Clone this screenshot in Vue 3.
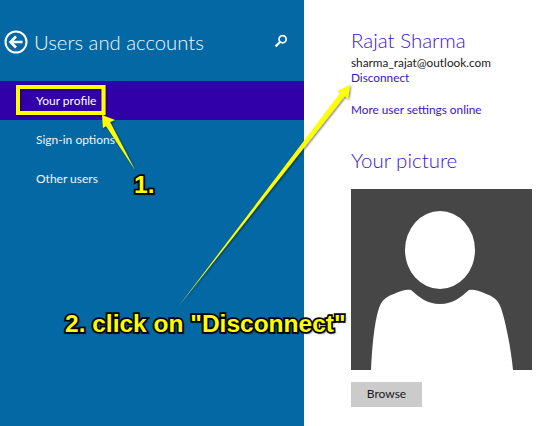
<template>
  <div class="page">
    <aside class="sidebar">
      <header class="side-head">
        <svg class="back" viewBox="0 0 24 24" width="24" height="24">
          <circle cx="12" cy="12" r="10.5" fill="none" stroke="#fff" stroke-width="2" />
          <path d="M18.5 12H7M12 6.5 6.5 12l5.5 5.5" fill="none" stroke="#fff" stroke-width="2.6" />
        </svg>
        <h1 class="side-title">Users and accounts</h1>
        <svg class="search" viewBox="0 0 14 14" width="14" height="14">
          <circle cx="8.6" cy="5.2" r="3.6" fill="none" stroke="#fff" stroke-width="1.7" />
          <path d="M6 8 1.6 12.4" stroke="#fff" stroke-width="2.2" fill="none" />
        </svg>
      </header>
      <nav class="menu">
        <a
          v-for="item in menu"
          :key="item"
          class="menu-item"
          :class="{ active: item === 'Your profile' }"
        >{{ item }}</a>
      </nav>
    </aside>

    <main class="content">
      <h2 class="heading">Rajat Sharma</h2>
      <div class="email">sharma_rajat@outlook.com</div>
      <a class="link">Disconnect</a>
      <a class="link more">More user settings online</a>
      <h2 class="heading picture-title">Your picture</h2>
      <svg class="picture" viewBox="0 0 181 181" width="181" height="181">
        <rect width="181" height="181" fill="#464646" />
        <ellipse cx="89" cy="61" rx="35" ry="39" fill="#fff" />
        <path
          d="M20 181C21 160 23 134 28 119C31 110 37 107 45 104C50 102 55 100 60 101C68 108 76 115 89 115C102 115 110 108 118 101C123 100 128 102 133 104C141 107 147 110 150 119C155 134 160 160 162 181Z"
          fill="#fff"
        />
      </svg>
      <button class="browse">Browse</button>
    </main>

    <!-- annotations drawn on top of the screenshot -->
    <svg class="marks" viewBox="0 0 550 426" width="550" height="426">
      <defs>
        <filter id="soft" x="-20%" y="-20%" width="140%" height="140%">
          <feDropShadow dx="1" dy="1" stdDeviation="0.8" flood-color="#000" flood-opacity="0.55" />
        </filter>
      </defs>
      <g filter="url(#soft)" fill="#ffff00">
        <path d="M18 87H103.5V113H18Z" fill="none" stroke="#ffff00" stroke-width="4" />
        <polygon points="102,115 115,120 110,122 135,170 106,126 103,128" />
        <polygon points="350,85 348,99 345,96 178,307 341,92 337,91" />
      </g>
    </svg>
    <span class="note note-one">1.</span>
    <span class="note note-two">2. click on "Disconnect"</span>
  </div>
</template>

<script setup>
const menu = ['Your profile', 'Sign-in options', 'Other users']
</script>

<style>
html,
body {
  margin: 0;
  background: #fff;
}
</style>

<style scoped>
.page {
  position: relative;
  display: flex;
  width: 550px;
  height: 426px;
  overflow: hidden;
  font-family: Lato, "Open Sans", sans-serif;
}

.sidebar {
  width: 304px;
  flex: none;
  background: #0468a4;
  color: #fff;
}

.side-head {
  display: flex;
  align-items: center;
  height: 81px;
  padding: 0 16px 0 4px;
  box-sizing: border-box;
}

.back {
  flex: none;
  margin-right: 6px;
  margin-top: 2px;
}

.side-title {
  flex: 1;
  margin: 2px 0 0;
  font-size: 20.3px;
  font-weight: 300;
  color: #f2f8fb;
}

.search {
  flex: none;
  margin-top: 1px;
}

.menu {
  display: flex;
  flex-direction: column;
}

.menu-item {
  height: 39px;
  padding-left: 36px;
  font-size: 12px;
  line-height: 39px;
  color: #f0f6fa;
}

.menu-item.active {
  background: #3100a9;
  color: #fff;
}

.content {
  flex: 1;
  display: flex;
  flex-direction: column;
  align-items: flex-start;
  padding: 27px 0 0 47px;
}

.heading {
  margin: 0;
  font-size: 20.5px;
  line-height: 26px;
  font-weight: 300;
  color: #3d16c4;
}

.email {
  margin-top: 2px;
  font-size: 11.8px;
  line-height: 15px;
  color: #1a1a1a;
}

.link {
  font-size: 11.8px;
  line-height: 16px;
  color: #3a12c8;
}

.more {
  margin-top: 16px;
}

.picture-title {
  margin-top: 29px;
}

.picture {
  display: block;
  margin-top: 16px;
}

.browse {
  width: 71px;
  height: 25px;
  margin-top: 12px;
  padding: 0 0 2px;
  border: 0;
  background: #cbcbcb;
  font-family: inherit;
  font-size: 12px;
  color: #1a1a1a;
}

.marks {
  position: absolute;
  left: 0;
  top: 0;
  pointer-events: none;
}

.note {
  position: absolute;
  font-family: "Liberation Sans", Arial, sans-serif;
  font-size: 24.5px;
  line-height: 26px;
  font-weight: 700;
  color: #ffff00;
  white-space: nowrap;
  -webkit-text-stroke: 3.5px #000;
  paint-order: stroke fill;
  text-shadow: 2px 2px 2px rgba(0, 0, 0, 0.45);
}

.note-one {
  left: 134px;
  top: 172px;
}

.note-two {
  left: 65px;
  top: 311px;
}
</style>
